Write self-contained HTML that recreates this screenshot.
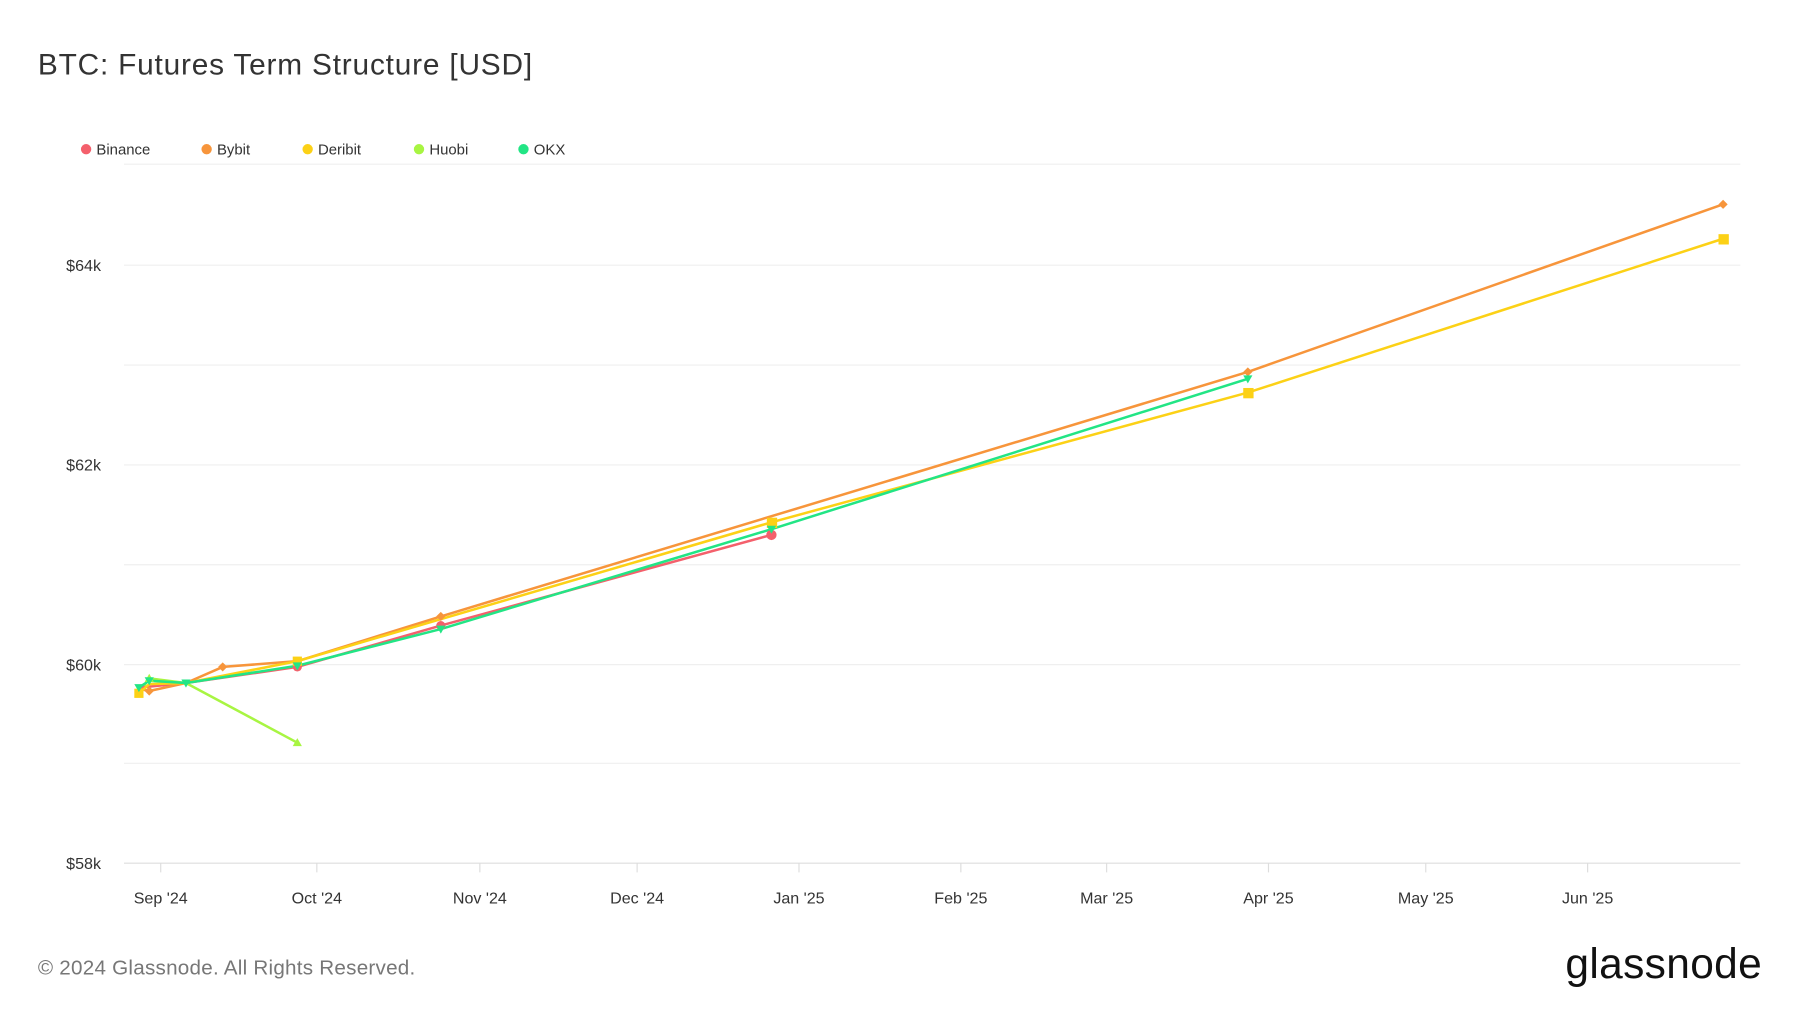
<!DOCTYPE html>
<html><head><meta charset="utf-8"><style>
html,body{margin:0;padding:0;background:#fff;width:1800px;height:1013px;overflow:hidden}
text{font-family:"Liberation Sans",sans-serif}
</style></head><body>
<svg width="1800" height="1013" viewBox="0 0 1568 882.5" preserveAspectRatio="none" xmlns="http://www.w3.org/2000/svg">
<text x="33" y="65" font-size="26" fill="#333" letter-spacing="0.7">BTC: Futures Term Structure [USD]</text>
<g font-size="13" fill="#333">
<circle cx="75" cy="130" r="4.5" fill="#f4606c"/><text x="84" y="134.5">Binance</text>
<circle cx="180" cy="130" r="4.5" fill="#f7953b"/><text x="189" y="134.5">Bybit</text>
<circle cx="268" cy="130" r="4.5" fill="#fcd116"/><text x="277" y="134.5">Deribit</text>
<circle cx="365" cy="130" r="4.5" fill="#a8f542"/><text x="374" y="134.5">Huobi</text>
<circle cx="456" cy="130" r="4.5" fill="#22e585"/><text x="465" y="134.5">OKX</text>
</g>
<g stroke="#efefef" stroke-width="1">
<line x1="108" x2="1516" y1="143" y2="143"/><line x1="108" x2="1516" y1="231" y2="231"/>
<line x1="108" x2="1516" y1="318" y2="318"/><line x1="108" x2="1516" y1="405" y2="405"/>
<line x1="108" x2="1516" y1="492" y2="492"/><line x1="108" x2="1516" y1="579" y2="579"/>
<line x1="108" x2="1516" y1="665" y2="665"/>
</g>
<line x1="108" x2="1516" y1="752" y2="752" stroke="#ddd"/>
<g stroke="#ddd"><line x1="140" x2="140" y1="752" y2="760"/><line x1="276" x2="276" y1="752" y2="760"/><line x1="418" x2="418" y1="752" y2="760"/><line x1="555" x2="555" y1="752" y2="760"/><line x1="696" x2="696" y1="752" y2="760"/><line x1="837" x2="837" y1="752" y2="760"/><line x1="964" x2="964" y1="752" y2="760"/><line x1="1105" x2="1105" y1="752" y2="760"/><line x1="1242" x2="1242" y1="752" y2="760"/><line x1="1383" x2="1383" y1="752" y2="760"/></g>
<g font-size="14" fill="#333" text-anchor="end">
<text x="88" y="236">$64k</text><text x="88" y="410">$62k</text><text x="88" y="584">$60k</text><text x="88" y="757">$58k</text>
</g>
<g font-size="14" fill="#333" text-anchor="middle">
<text x="140" y="787">Sep '24</text><text x="276" y="787">Oct '24</text><text x="418" y="787">Nov '24</text><text x="555" y="787">Dec '24</text><text x="696" y="787">Jan '25</text><text x="837" y="787">Feb '25</text><text x="964" y="787">Mar '25</text><text x="1105" y="787">Apr '25</text><text x="1242" y="787">May '25</text><text x="1383" y="787">Jun '25</text>
</g>
<g fill="none" stroke-width="2.2" stroke-linejoin="round">
<polyline stroke="#a8f542" points="121,604 130,591 162,595 259,647"/>
<polyline stroke="#f4606c" points="121,599 162,595 259,581 384,545 672,466"/>
<polyline stroke="#f7953b" points="121,600 130,602 162,595 194,581 259,576 384,537 1087,324 1501,178"/>
<polyline stroke="#fcd116" points="121,604 130,596 162,595 259,576 672,455 1087,342 1501,208"/>
<polyline stroke="#22e585" points="121,599 130,593 162,595 259,580 384,548 672,461 1087,330"/>
</g>
<g fill="#a8f542"><path d="M121,600l4,7h-8z"/><path d="M130,587l4,7h-8z"/><path d="M259,643l4,7h-8z"/></g>
<g fill="#f4606c"><circle cx="259" cy="581" r="4"/><circle cx="384" cy="545" r="4"/><circle cx="672" cy="466" r="4.5"/></g>
<g fill="#f7953b"><path d="M130,598l4,4-4,4-4-4z"/><path d="M194,577l4,4-4,4-4-4z"/><path d="M384,533l4,4-4,4-4-4z"/><path d="M1087,320l4,4-4,4-4-4z"/><path d="M1501,174l4,4-4,4-4-4z"/></g>
<g fill="#fcd116"><rect x="117" y="600" width="8" height="8"/><rect x="255" y="572" width="8" height="8"/><rect x="668" y="451" width="9" height="9"/><rect x="1083" y="338" width="9" height="9"/><rect x="1497" y="204" width="9" height="9"/></g>
<g fill="#22e585"><path d="M117,596h8l-4,7z"/><path d="M126,590h8l-4,7z"/><path d="M158,592h8l-4,7z"/><path d="M255,577h8l-4,7z"/><path d="M380,545h8l-4,7z"/><path d="M668,458h8l-4,7z"/><path d="M1083,327h8l-4,7z"/></g>
<text x="33" y="849" font-size="18" fill="#777" letter-spacing="0.2">© 2024 Glassnode. All Rights Reserved.</text>
<text x="1535" y="852" font-size="37" fill="#111" text-anchor="end" letter-spacing="0.3">glassnode</text>
</svg>
</body></html>
